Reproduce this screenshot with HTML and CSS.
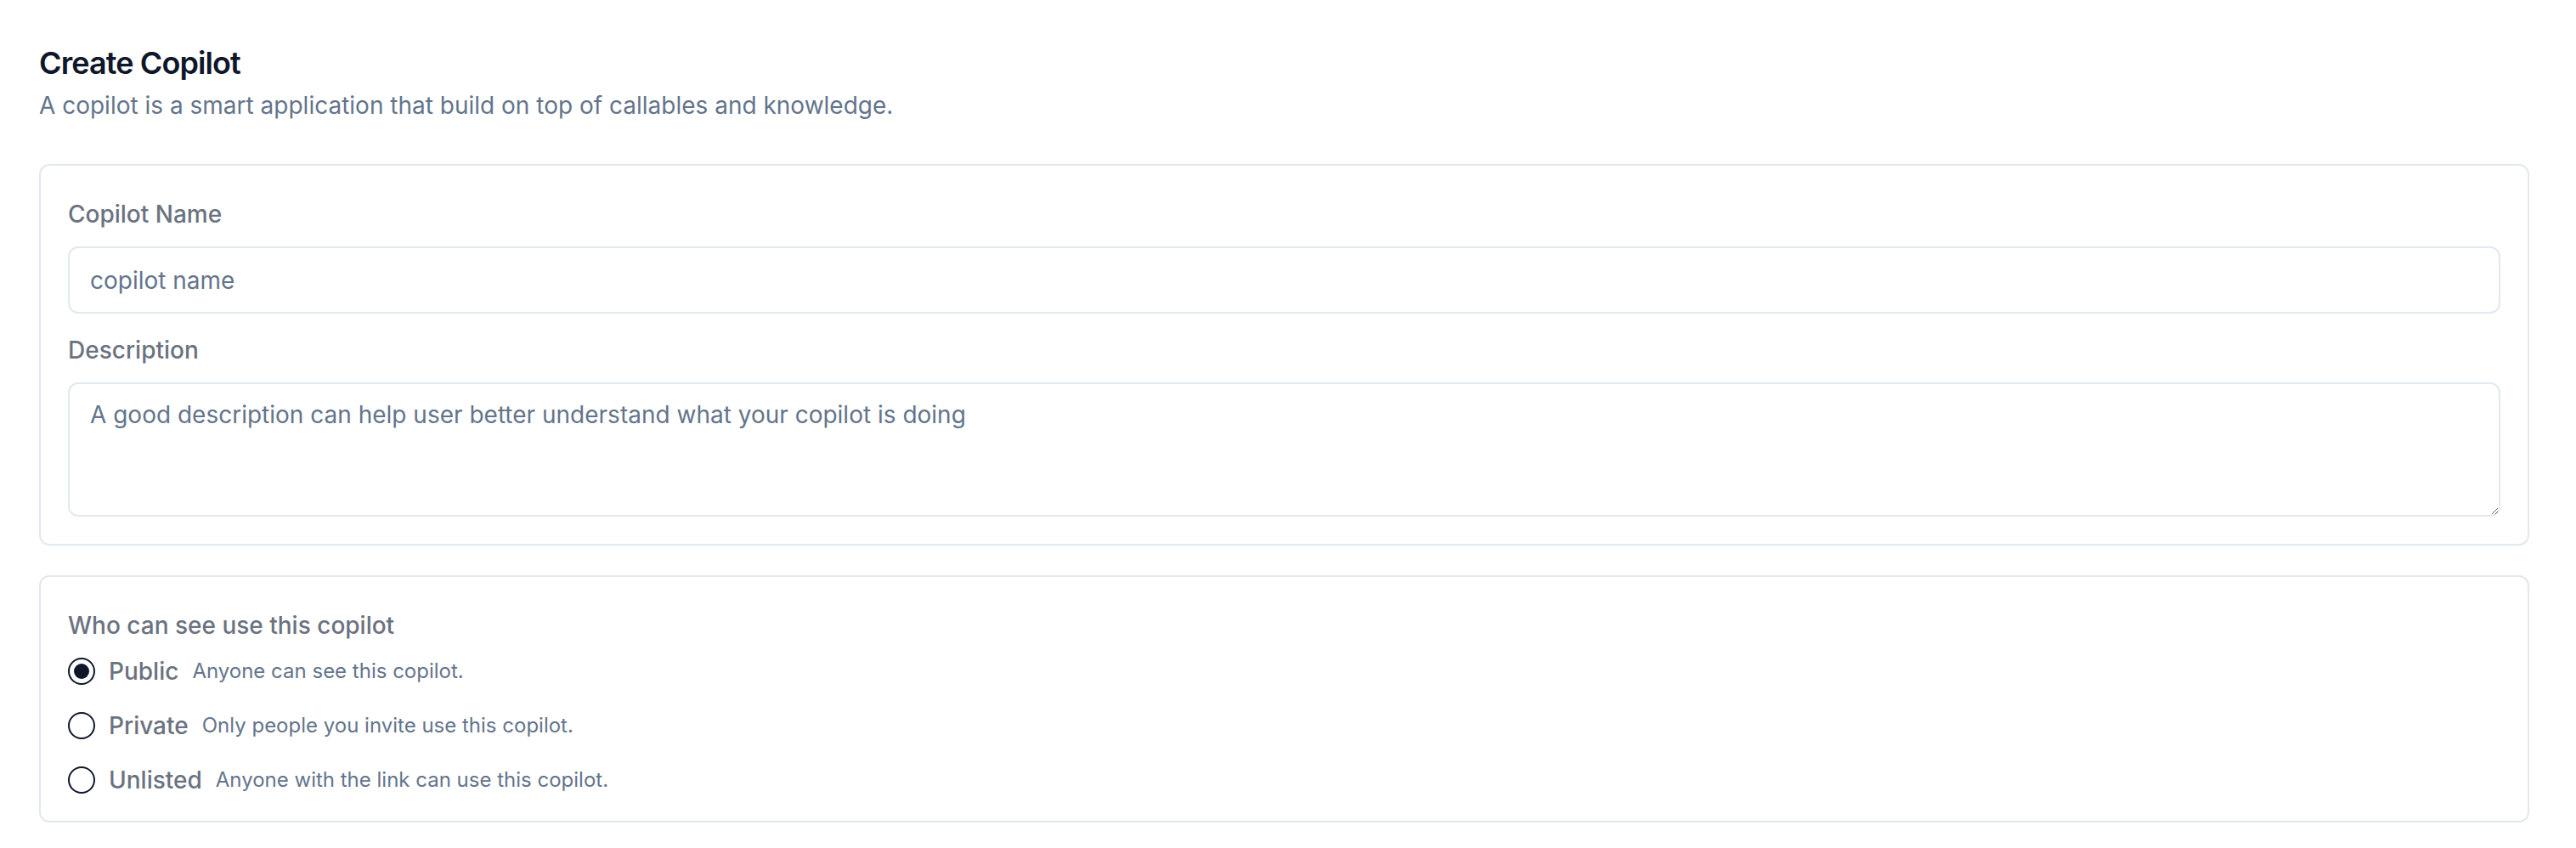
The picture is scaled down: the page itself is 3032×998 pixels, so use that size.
FILE: index.html
```html
<!DOCTYPE html>
<html lang="en">
<head>
<meta charset="utf-8">
<title>Create Copilot</title>
<link rel="stylesheet" href="styles.css">
</head>
<body>
<main class="page">
  <header class="head">
    <h1 class="title">Create Copilot</h1>
    <p class="subtitle">A copilot is a smart application that build on top of callables and knowledge.</p>
  </header>

  <section class="card card-form">
    <div class="field">
      <label class="label" for="copilot-name">Copilot Name</label>
      <input class="input" id="copilot-name" type="text" placeholder="copilot name">
    </div>
    <div class="field field-desc">
      <label class="label" for="copilot-desc">Description</label>
      <textarea class="textarea" id="copilot-desc" placeholder="A good description can help user better understand what your copilot is doing"></textarea>
    </div>
  </section>

  <section class="card card-visibility">
    <div class="label">Who can see use this copilot</div>
    <div class="radio-group">
      <label class="radio-row">
        <span class="radio radio-checked"><span class="radio-dot"></span></span>
        <span class="radio-title">Public</span>
        <span class="radio-desc">Anyone can see this copilot.</span>
      </label>
      <label class="radio-row">
        <span class="radio"></span>
        <span class="radio-title">Private</span>
        <span class="radio-desc">Only people you invite use this copilot.</span>
      </label>
      <label class="radio-row">
        <span class="radio"></span>
        <span class="radio-title">Unlisted</span>
        <span class="radio-desc">Anyone with the link can use this copilot.</span>
      </label>
    </div>
  </section>
</main>
</body>
</html>
```

FILE: styles.css
```css
* {
  box-sizing: border-box;
}

html, body {
  margin: 0;
  background: #ffffff;
}

body {
  font-family: Inter, "Noto Sans", "Liberation Sans", sans-serif;
  color: #020817;
}

.page {
  padding: 46px 55px 0 46px;
}

.head {
  display: flex;
  flex-direction: column;
}

.title {
  margin: 0;
  font-size: 36px;
  line-height: 56px;
  font-weight: 600;
  color: #0f172a;
  letter-spacing: -0.9px;
}

.subtitle {
  margin: 2px 0 0;
  font-size: 28px;
  line-height: 40px;
  color: #64748b;
}

.card {
  border: 2px solid #e2e8f0;
  border-radius: 12px;
  padding: 37px 32px 32px;
  display: flex;
  flex-direction: column;
}

.card-form {
  margin-top: 49px;
}

.card-visibility {
  margin-top: 35px;
}

.field {
  display: flex;
  flex-direction: column;
  gap: 18px;
}

.field-desc {
  margin-top: 23px;
}

.label {
  font-size: 28px;
  line-height: 40px;
  color: #6b7280;
  font-weight: 500;
}

.input,
.textarea {
  display: block;
  width: 100%;
  border: 2px solid #e2e8f0;
  border-radius: 12px;
  background: #ffffff;
  font-family: Inter, "Noto Sans", "Liberation Sans", sans-serif;
  font-size: 28px;
  line-height: 40px;
  color: #0f172a;
  padding: 0 24px;
  margin: 0;
  outline: none;
}

.input {
  height: 79px;
}

.textarea {
  height: 158px;
  padding: 16px 24px;
  resize: vertical;
}

.input::placeholder,
.textarea::placeholder {
  color: #64748b;
  opacity: 1;
}

.card-visibility .label {
  margin-bottom: 18px;
}

.radio-group {
  display: flex;
  flex-direction: column;
  gap: 32px;
}

.radio-row {
  display: flex;
  align-items: center;
  height: 32px;
}

.radio {
  width: 32px;
  height: 32px;
  flex: 0 0 32px;
  border: 2px solid #0f172a;
  border-radius: 50%;
  display: flex;
  align-items: center;
  justify-content: center;
  margin-right: 16px;
}

.radio-dot {
  width: 18px;
  height: 18px;
  border-radius: 50%;
  background: #0f172a;
}

.radio-title {
  font-size: 28px;
  line-height: 40px;
  font-weight: 500;
  color: #6b7280;
  margin-right: 16px;
}

.radio-desc {
  font-size: 24px;
  line-height: 32px;
  color: #64748b;
}
```
